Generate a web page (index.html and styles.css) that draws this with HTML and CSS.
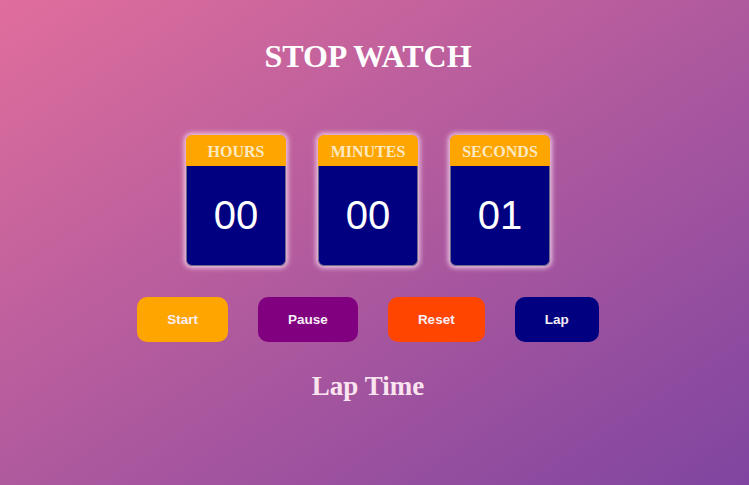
FILE: index.html
```html
<!DOCTYPE html>
<html>
<head>
<meta charset="utf-8">
<link rel="stylesheet" href="styles.css">
</head>
<body>
<main class="app">
  <h1 class="title">STOP WATCH</h1>
  <section class="timers">
    <div class="card"><div class="card-head">HOURS</div><div class="card-body">00</div></div>
    <div class="card"><div class="card-head">MINUTES</div><div class="card-body">00</div></div>
    <div class="card"><div class="card-head">SECONDS</div><div class="card-body">01</div></div>
  </section>
  <section class="controls">
    <button class="btn btn-start">Start</button>
    <button class="btn btn-pause">Pause</button>
    <button class="btn btn-reset">Reset</button>
    <button class="btn btn-lap">Lap</button>
  </section>
  <h2 class="laps">Lap Time</h2>
</main>
</body>
</html>
```
FILE: styles.css
```css
html, body {
  margin: 0;
  padding: 0;
  height: 100%;
}
body {
  background: linear-gradient(to bottom right, #e06e9c, #7f45a0);
  font-family: "Liberation Serif", serif;
  overflow: hidden;
}
.app {
  width: 736px;
  display: flex;
  flex-direction: column;
  align-items: center;
}
.title {
  margin: 38px 0 0;
  font-size: 32px;
  line-height: 37px;
  font-weight: bold;
  color: #fff;
}
.timers {
  display: flex;
  gap: 32px;
  margin-top: 60px;
}
.card {
  width: 100px;
  height: 131px;
  border-radius: 6px;
  overflow: hidden;
  box-shadow: 0 0 5px 2px rgba(255, 235, 250, 0.75);
  display: flex;
  flex-direction: column;
}
.card-head {
  height: 31px;
  background: #ffa500;
  color: #fde9c0;
  font-size: 16px;
  font-weight: bold;
  text-align: center;
  line-height: 34px;
}
.card-body {
  flex: 1;
  background: #000080;
  color: #fff;
  font-family: "Liberation Sans", Arial, sans-serif;
  font-size: 40px;
  display: flex;
  align-items: center;
  justify-content: center;
  border: 1px solid #6a6a8a;
  border-top: none;
  border-radius: 0 0 6px 6px;
}
.controls {
  display: flex;
  gap: 30px;
  margin-top: 31px;
}
.btn {
  height: 45px;
  padding: 0 30px;
  border: none;
  border-radius: 10px;
  color: #f7eef7;
  font-family: "Liberation Sans", Arial, sans-serif;
  font-size: 13.5px;
  font-weight: bold;
}
.btn-start { background: #ffa500; }
.btn-pause { background: #800080; }
.btn-reset { background: #ff4500; }
.btn-lap { background: #000080; }
.laps {
  margin: 29px 0 0;
  font-size: 27px;
  line-height: 31px;
  font-weight: bold;
  color: #f9e4f0;
}
```
